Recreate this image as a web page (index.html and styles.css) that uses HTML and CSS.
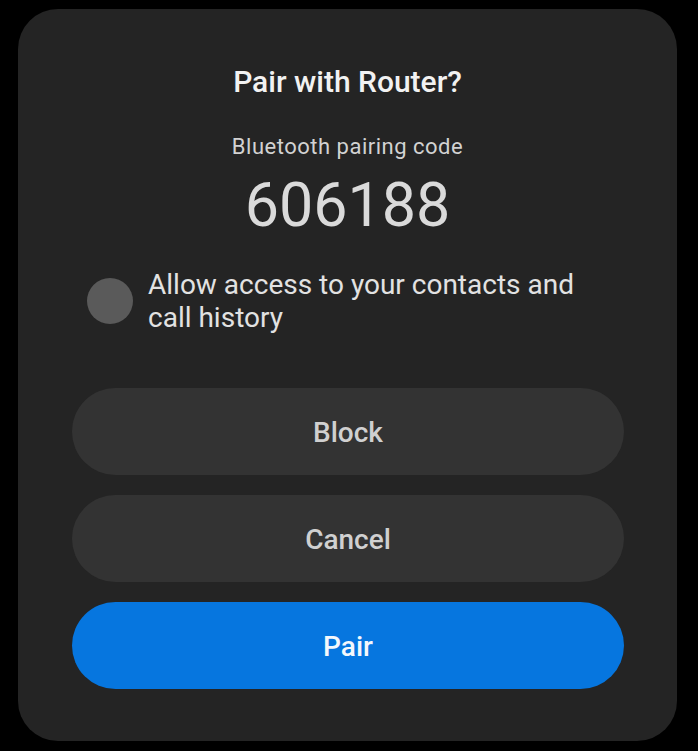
FILE: index.html
```html
<!DOCTYPE html>
<html lang="en">
<head>
    <meta charset="UTF-8">
    <meta name="viewport" content="width=device-width, initial-scale=1.0">
    <title>Pair with Router?</title>
    <link rel="stylesheet" href="styles.css">
</head>
<body>
    <div class="dialog">
        <h2 class="title">Pair with Router?</h2>
        <p class="label">Bluetooth pairing code</p>
        <p class="code">606188</p>

        <!-- contacts permission -->
        <div class="option">
            <span class="check"></span>
            <span class="option-text">Allow access to your contacts and call history</span>
        </div>

        <div class="actions">
            <button class="btn">Block</button>
            <button class="btn">Cancel</button>
            <button class="btn btn-primary">Pair</button>
        </div>
    </div>
</body>
</html>
```

FILE: styles.css
```css
/* styles.css */
body {
margin: 0;
background-color: #000;
font-family: Roboto, "Liberation Sans", sans-serif;
}

.dialog {
margin: 9px 0 0 18px;
width: 659px;
height: 732px;
box-sizing: border-box;
padding-top: 57px;
background-color: #242424;
border-radius: 40px;
text-align: center;
}

.title {
margin: 0;
font-size: 30px;
line-height: 32px;
font-weight: 500;
color: #f2f2f2;
}

.label {
margin: 36px 0 0;
font-size: 22px;
line-height: 26px;
letter-spacing: 0.5px;
color: #d2d2d2;
}

.code {
margin: 13px 0 0;
font-size: 61px;
line-height: 64px;
color: #dadada;
}

.option {
display: flex;
align-items: center;
gap: 15px;
margin: 31px 0 0;
padding: 0 80px 0 69px;
text-align: left;
}

.check {
flex: none;
width: 46px;
height: 46px;
border-radius: 50%;
background-color: #5a5a5a;
}

.option-text {
font-size: 28px;
line-height: 33px;
color: #e2e2e2;
}

.actions {
display: flex;
flex-direction: column;
gap: 20px;
margin: 54px 0 0 54px;
width: 552px;
}

.btn {
height: 87px;
padding: 2px 0 0;
border: none;
border-radius: 44px;
background-color: #333333;
color: #d0d0d0;
font-family: Roboto, "Liberation Sans", sans-serif;
font-size: 28px;
font-weight: 500;
cursor: pointer;
}

.btn-primary {
background-color: #0676df;
color: #f4f8fc;
}
```
